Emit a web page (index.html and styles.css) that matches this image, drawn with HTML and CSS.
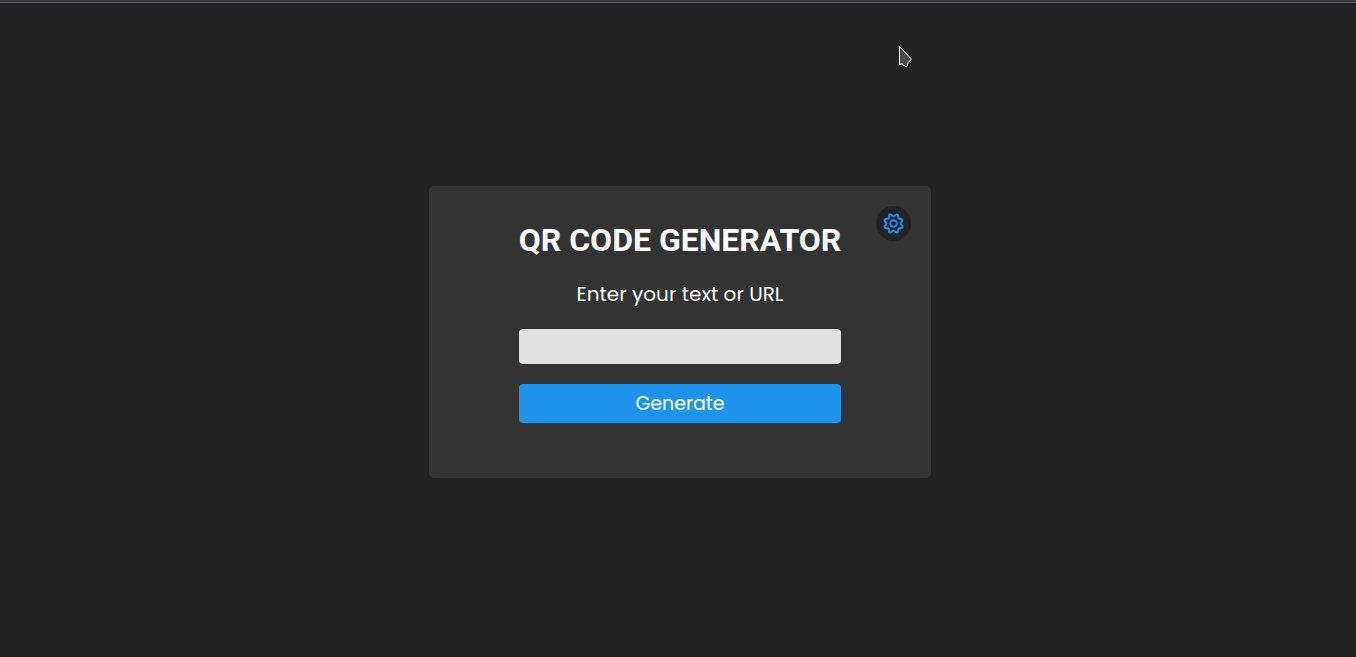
FILE: index.html
```html
<!DOCTYPE html>
<html lang="en">
<head>
  <meta charset="utf-8">
  <meta name="viewport" content="width=device-width, initial-scale=1">
  <title>QR Code Generator</title>
  <link rel="stylesheet" href="styles.css">
</head>
<body>
  <div class="top-strip"></div>
  <main class="stage">
    <section class="card">
      <button class="settings" type="button" aria-label="Settings">
        <svg class="settings-icon" viewBox="-12.5 -12.5 25 25" aria-hidden="true">
          <path d="M0-7 3.1-9.1 4.2-8.7 5-5 8.7-4.2 9.1-3.1 7 0 9.1 3.1 8.7 4.2 5 5 4.2 8.7 3.1 9.1 0 7-3.1 9.1-4.2 8.7-5 5-8.7 4.2-9.1 3.1-7 0-9.1-3.1-8.7-4.2-5-5-4.2-8.7-3.1-9.1Z"/>
          <circle r="3.3"/>
        </svg>
      </button>
      <form class="form">
        <h1 class="title">QR CODE GENERATOR</h1>
        <label class="label" for="qr-text">Enter your text or URL</label>
        <input class="field" id="qr-text" type="text">
        <button class="generate" type="button">Generate</button>
      </form>
    </section>
  </main>
  <svg class="pointer" viewBox="0 0 14 22" aria-hidden="true">
    <path d="M1.5 .7V18.5L4.6 17.8 5.6 19.6 8.8 20.8 10.2 16.6 13.4 13Z"/>
  </svg>
</body>
</html>
```

FILE: styles.css
```css
* {
  box-sizing: border-box;
}

body {
  display: flex;
  flex-direction: column;
  min-height: 100vh;
  margin: 0;
  background: #222;
  color: #fff;
  font-family: Poppins, Inter, sans-serif;
}

.top-strip {
  height: 3px;
  background: #35363a;
  border-bottom: 1px solid #5f6063;
}

.stage {
  flex: 1;
  display: grid;
  place-items: center;
  padding: 4px 0 0 4px;
}

.card {
  position: relative;
  padding: 34px 90px 55px;
  border-radius: 5px;
  background: #333;
}

.form {
  display: flex;
  flex-direction: column;
  align-items: stretch;
}

.title {
  margin: 0 0 20px;
  font: 700 32px/40px Roboto, sans-serif;
  text-align: center;
}

.label {
  margin-bottom: 20px;
  font-size: 20px;
  line-height: 29px;
  text-align: center;
}

.field {
  width: 0;
  min-width: 100%;
  height: 35px;
  margin-bottom: 20px;
  padding: 0 10px;
  border: 0;
  border-radius: 4px;
  background: #e1e1e1;
  font: inherit;
}

.generate {
  height: 39px;
  padding: 0;
  border: 0;
  border-radius: 4px;
  background: #1e93ec;
  color: #fff;
  font: inherit;
  font-size: 19px;
}

.settings {
  position: absolute;
  top: 20px;
  right: 20px;
  display: grid;
  place-items: center;
  width: 35px;
  height: 35px;
  padding: 0;
  border: 0;
  border-radius: 50%;
  background: #222;
}

.settings-icon {
  width: 25px;
  height: 25px;
  fill: none;
  stroke: #1e90f8;
  stroke-width: 2;
  stroke-linejoin: round;
}

.pointer {
  position: absolute;
  top: 46px;
  left: 898px;
  width: 14px;
  height: 22px;
  fill: #4a4a4a;
  stroke: #fff;
  stroke-width: 1;
  pointer-events: none;
}
```
